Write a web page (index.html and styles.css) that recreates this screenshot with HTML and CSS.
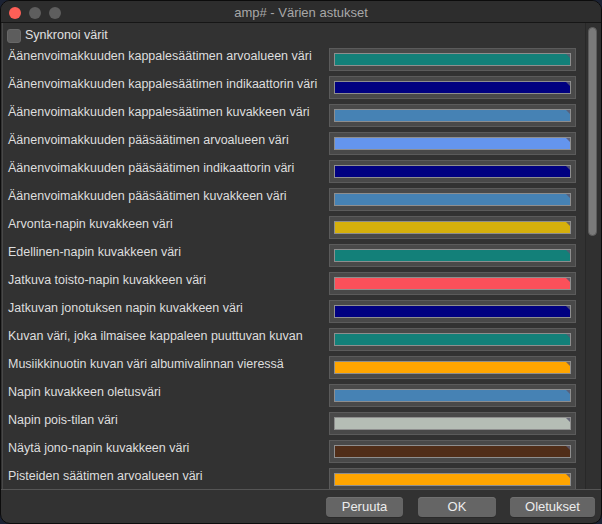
FILE: index.html
```html
<!DOCTYPE html>
<html lang="fi">
<head>
<meta charset="utf-8">
<title>amp# - Värien astukset</title>
<link rel="stylesheet" href="styles.css">
</head>
<body>
<div class="window">
  <div class="titlebar">
    <div class="lights">
      <span class="light red"></span>
      <span class="light gray"></span>
      <span class="light gray"></span>
    </div>
    <div class="title">amp# - Värien astukset</div>
  </div>
  <div class="main">
    <div class="scroll">
      <div class="sync">
        <span class="checkbox"></span>
        <span class="sync-label">Synkronoi värit</span>
      </div>
      <div class="row"><span class="label">Äänenvoimakkuuden kappalesäätimen arvoalueen väri</span><span class="box"><span class="swatch" style="background:#138079"></span></span></div>
      <div class="row"><span class="label">Äänenvoimakkuuden kappalesäätimen indikaattorin väri</span><span class="box"><span class="swatch" style="background:#000080"></span></span></div>
      <div class="row"><span class="label">Äänenvoimakkuuden kappalesäätimen kuvakkeen väri</span><span class="box"><span class="swatch" style="background:#4682b4"></span></span></div>
      <div class="row"><span class="label">Äänenvoimakkuuden pääsäätimen arvoalueen väri</span><span class="box"><span class="swatch" style="background:#6495ed"></span></span></div>
      <div class="row"><span class="label">Äänenvoimakkuuden pääsäätimen indikaattorin väri</span><span class="box"><span class="swatch" style="background:#000080"></span></span></div>
      <div class="row"><span class="label">Äänenvoimakkuuden pääsäätimen kuvakkeen väri</span><span class="box"><span class="swatch" style="background:#4682b4"></span></span></div>
      <div class="row"><span class="label">Arvonta-napin kuvakkeen väri</span><span class="box"><span class="swatch" style="background:#d6b00c"></span></span></div>
      <div class="row"><span class="label">Edellinen-napin kuvakkeen väri</span><span class="box"><span class="swatch" style="background:#138079"></span></span></div>
      <div class="row"><span class="label">Jatkuva toisto-napin kuvakkeen väri</span><span class="box"><span class="swatch" style="background:#fb505a"></span></span></div>
      <div class="row"><span class="label">Jatkuvan jonotuksen napin kuvakkeen väri</span><span class="box"><span class="swatch" style="background:#000080"></span></span></div>
      <div class="row"><span class="label">Kuvan väri, joka ilmaisee kappaleen puuttuvan kuvan</span><span class="box"><span class="swatch" style="background:#138079"></span></span></div>
      <div class="row"><span class="label">Musiikkinuotin kuvan väri albumivalinnan vieressä</span><span class="box"><span class="swatch" style="background:#ffa500"></span></span></div>
      <div class="row"><span class="label">Napin kuvakkeen oletusväri</span><span class="box"><span class="swatch" style="background:#4682b4"></span></span></div>
      <div class="row"><span class="label">Napin pois-tilan väri</span><span class="box"><span class="swatch" style="background:#b5bdb5"></span></span></div>
      <div class="row"><span class="label">Näytä jono-napin kuvakkeen väri</span><span class="box"><span class="swatch" style="background:#502d18"></span></span></div>
      <div class="row"><span class="label">Pisteiden säätimen arvoalueen väri</span><span class="box"><span class="swatch" style="background:#ffa500"></span></span></div>
    </div>
    <div class="scrollbar"><div class="thumb"></div></div>
  </div>
  <div class="buttons">
    <button class="btn w-peruuta">Peruuta</button>
    <button class="btn w-ok">OK</button>
    <button class="btn w-oletukset">Oletukset</button>
  </div>
</div>
</body>
</html>
```
FILE: styles.css
```css
html, body {
  margin: 0;
  padding: 0;
}
body {
  width: 602px;
  height: 524px;
  background: #1b2233;
  font-family: "Liberation Sans", Arial, sans-serif;
  font-size: 13px;
  color: #dedede;
  overflow: hidden;
}
.window {
  width: 602px;
  height: 524px;
  box-sizing: border-box;
  border: 1px solid #0c0c0c;
  border-radius: 10px;
  background: #323232;
  overflow: hidden;
  display: flex;
  flex-direction: column;
}
.titlebar {
  height: 21px;
  flex: none;
  border-bottom: 1px solid #161616;
  background: #2d2d2d;
  display: flex;
  align-items: center;
  position: relative;
}
.lights {
  display: flex;
  gap: 8px;
  padding-left: 8px;
  padding-top: 2px;
}
.light {
  width: 12px;
  height: 12px;
  border-radius: 50%;
  display: block;
}
.light.red {
  background: #fe5f57;
}
.light.gray {
  background: #5e5e5e;
}
.title {
  position: absolute;
  left: 0;
  right: 0;
  top: 4px;
  text-align: center;
  color: #a8a8a8;
  font-size: 13px;
  line-height: 16px;
}
.main {
  display: flex;
  height: 466px;
  flex: none;
  border-bottom: 1px solid #555555;
}
.scroll {
  flex: 1;
  margin-left: 1px;
  border-left: 1px solid #484848;
  overflow: hidden;
}
.sync {
  height: 22px;
  display: flex;
  align-items: flex-start;
}
.checkbox {
  width: 14px;
  height: 14px;
  box-sizing: border-box;
  margin: 6px 0 0 4px;
  border-radius: 3px;
  background: #5d5d5d;
  border: 1px solid #676767;
}
.sync-label {
  margin-left: 4px;
  margin-top: 4px;
  line-height: 17px;
  font-size: 12.5px;
  color: #e0e0e0;
}
.row {
  height: 28px;
  display: flex;
  align-items: flex-start;
}
.label {
  flex: 1;
  padding-left: 5px;
  padding-top: 2px;
  line-height: 18px;
  font-size: 12.5px;
  white-space: nowrap;
}
.box {
  width: 247px;
  height: 23px;
  box-sizing: border-box;
  margin-top: 3px;
  margin-right: 9px;
  padding: 4px;
  background: #494949;
  border: 1px solid #5b5b5b;
  display: block;
}
.swatch {
  display: block;
  height: 13px;
  box-sizing: border-box;
  border: 1px solid #8e8e8e;
  position: relative;
}
.swatch::after {
  content: "";
  position: absolute;
  top: 0;
  right: 0;
  width: 0;
  height: 0;
  border-top: 4px solid rgba(90, 90, 110, 0.85);
  border-left: 4px solid transparent;
}
.scrollbar {
  width: 15px;
  flex: none;
  border-left: 1px solid #282828;
  background: #303030;
}
.thumb {
  margin: 4px 0 0 2px;
  width: 9px;
  height: 209px;
  box-sizing: border-box;
  border-radius: 5px;
  background: #7a7a7a;
  border: 1px solid #5c5c5c;
}
.buttons {
  flex: 1;
  display: flex;
  justify-content: flex-end;
  align-items: flex-start;
  gap: 15px;
  padding: 7px 6px 0 0;
}
.btn {
  height: 20px;
  padding: 0;
  border: none;
  border-radius: 4px;
  background: #656565;
  color: #ececec;
  font-family: "Liberation Sans", Arial, sans-serif;
  font-size: 13px;
  line-height: 20px;
  box-shadow: 0 1px 0 #2a2a2a, inset 0 1px 0 #707070;
}
.w-peruuta { width: 77px; }
.w-ok { width: 78px; margin-right: -1px; }
.w-oletukset { width: 85px; }
```
